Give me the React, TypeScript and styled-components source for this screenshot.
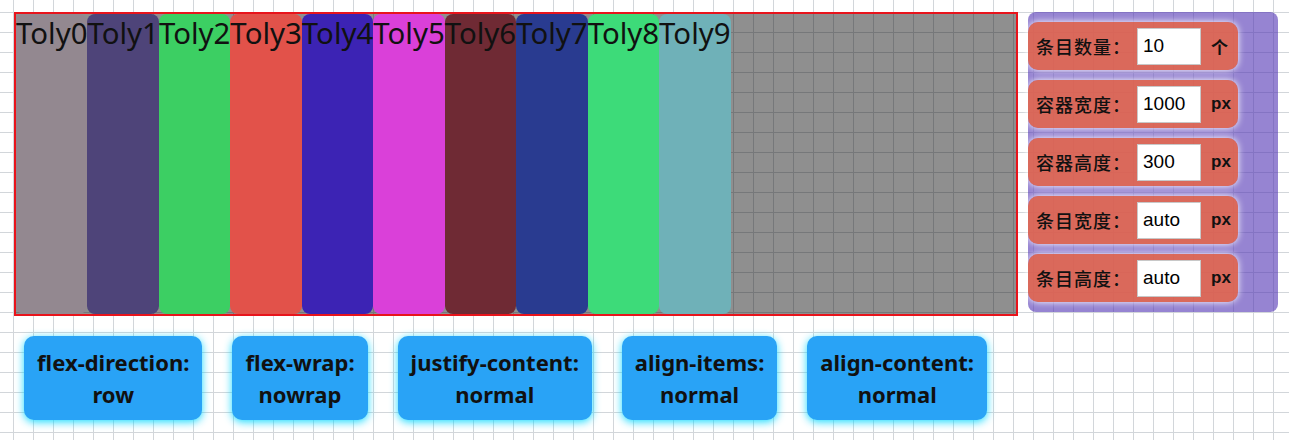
import React from 'react';
import styled, { createGlobalStyle } from 'styled-components';

const GlobalStyle = createGlobalStyle`
  html, body {
    margin: 0;
    padding: 0;
  }

  body {
    background-color: #fff;
    background-image:
      linear-gradient(to right, #d2d6da 1px, transparent 1px),
      linear-gradient(to bottom, #d2d6da 1px, transparent 1px);
    background-size: 20px 20px;
    background-position: 13px 12px;
    min-height: 440px;
  }
`;

const Page = styled.div`
  padding: 12px 0 0 14px;
`;

const TopRow = styled.div`
  display: flex;
  align-items: flex-start;
  gap: 10px;
`;

const FlexBox = styled.div`
  width: 1000px;
  height: 300px;
  border: 2px solid #e8141c;
  background: rgba(0, 0, 0, 0.44);
  display: flex;
  flex-direction: row;
  flex-wrap: nowrap;
`;

const Item = styled.div<{ $color: string }>`
  background: ${(props) => props.$color};
  border-radius: 8px;
  font-family: 'Noto Sans', sans-serif;
  font-size: 29.4px;
  line-height: 38px;
  color: #111;
`;

const ControlPanel = styled.div`
  width: 250px;
  padding: 10px 0;
  box-sizing: border-box;
  border-radius: 8px;
  background: rgba(80, 50, 180, 0.6);
  display: flex;
  flex-direction: column;
  gap: 10px;
`;

const ControlRow = styled.div`
  width: 210px;
  height: 48px;
  border-radius: 10px;
  background: rgba(230, 100, 70, 0.85);
  box-shadow: 0 0 7px rgba(255, 255, 255, 1);
  display: flex;
  align-items: center;
  padding-left: 8px;
  box-sizing: border-box;
`;

const Label = styled.span`
  font-family: 'Noto Sans CJK SC', sans-serif;
  font-size: 18px;
  font-weight: 500;
  letter-spacing: 1px;
  color: #111;
  width: 101px;
`;

const NumberInput = styled.input`
  width: 64px;
  height: 37px;
  box-sizing: border-box;
  border: 1px solid #c8c8c8;
  padding: 0 5px;
  font-family: 'Liberation Sans', Arial, sans-serif;
  font-size: 19px;
  color: #000;
  outline: none;
`;

const Unit = styled.span`
  margin-left: 10px;
  font-family: 'Liberation Sans', 'Noto Sans CJK SC', sans-serif;
  font-size: 17px;
  font-weight: bold;
  color: #111;
`;

const BottomRow = styled.div`
  display: flex;
  align-items: flex-start;
  gap: 30px;
  margin: 20px 0 0 10px;
`;

const PropButton = styled.div`
  padding: 10px 13px;
  border-radius: 10px;
  background: #29a3f6;
  box-shadow: 0 2px 8px rgba(0, 215, 255, 0.9);
  font-family: 'Noto Sans', sans-serif;
  font-weight: bold;
  font-size: 22px;
  line-height: 32px;
  color: #111;
  text-align: center;
`;

const colors = [
  '#938890',
  '#4e4479',
  '#3ccf63',
  '#e2524a',
  '#3c23b4',
  '#da40d9',
  '#6f2a34',
  '#293b90',
  '#3ddb79',
  '#6fb1b8',
];

const controls = [
  { label: '条目数量：', value: '10', unit: '个' },
  { label: '容器宽度：', value: '1000', unit: 'px' },
  { label: '容器高度：', value: '300', unit: 'px' },
  { label: '条目宽度：', value: 'auto', unit: 'px' },
  { label: '条目高度：', value: 'auto', unit: 'px' },
];

const props = [
  { name: 'flex-direction', value: 'row' },
  { name: 'flex-wrap', value: 'nowrap' },
  { name: 'justify-content', value: 'normal' },
  { name: 'align-items', value: 'normal' },
  { name: 'align-content', value: 'normal' },
];

const App = () => {
  return (
    <>
      <GlobalStyle />
      <Page>
        <TopRow>
          <FlexBox>
            {colors.map((color, i) => (
              <Item key={i} $color={color}>
                Toly{i}
              </Item>
            ))}
          </FlexBox>
          <ControlPanel>
            {controls.map((c) => (
              <ControlRow key={c.label}>
                <Label>{c.label}</Label>
                <NumberInput type="text" defaultValue={c.value} />
                <Unit>{c.unit}</Unit>
              </ControlRow>
            ))}
          </ControlPanel>
        </TopRow>
        <BottomRow>
          {props.map((p) => (
            <PropButton key={p.name}>
              {p.name}:
              <br />
              {p.value}
            </PropButton>
          ))}
        </BottomRow>
      </Page>
    </>
  );
};

export default App;
